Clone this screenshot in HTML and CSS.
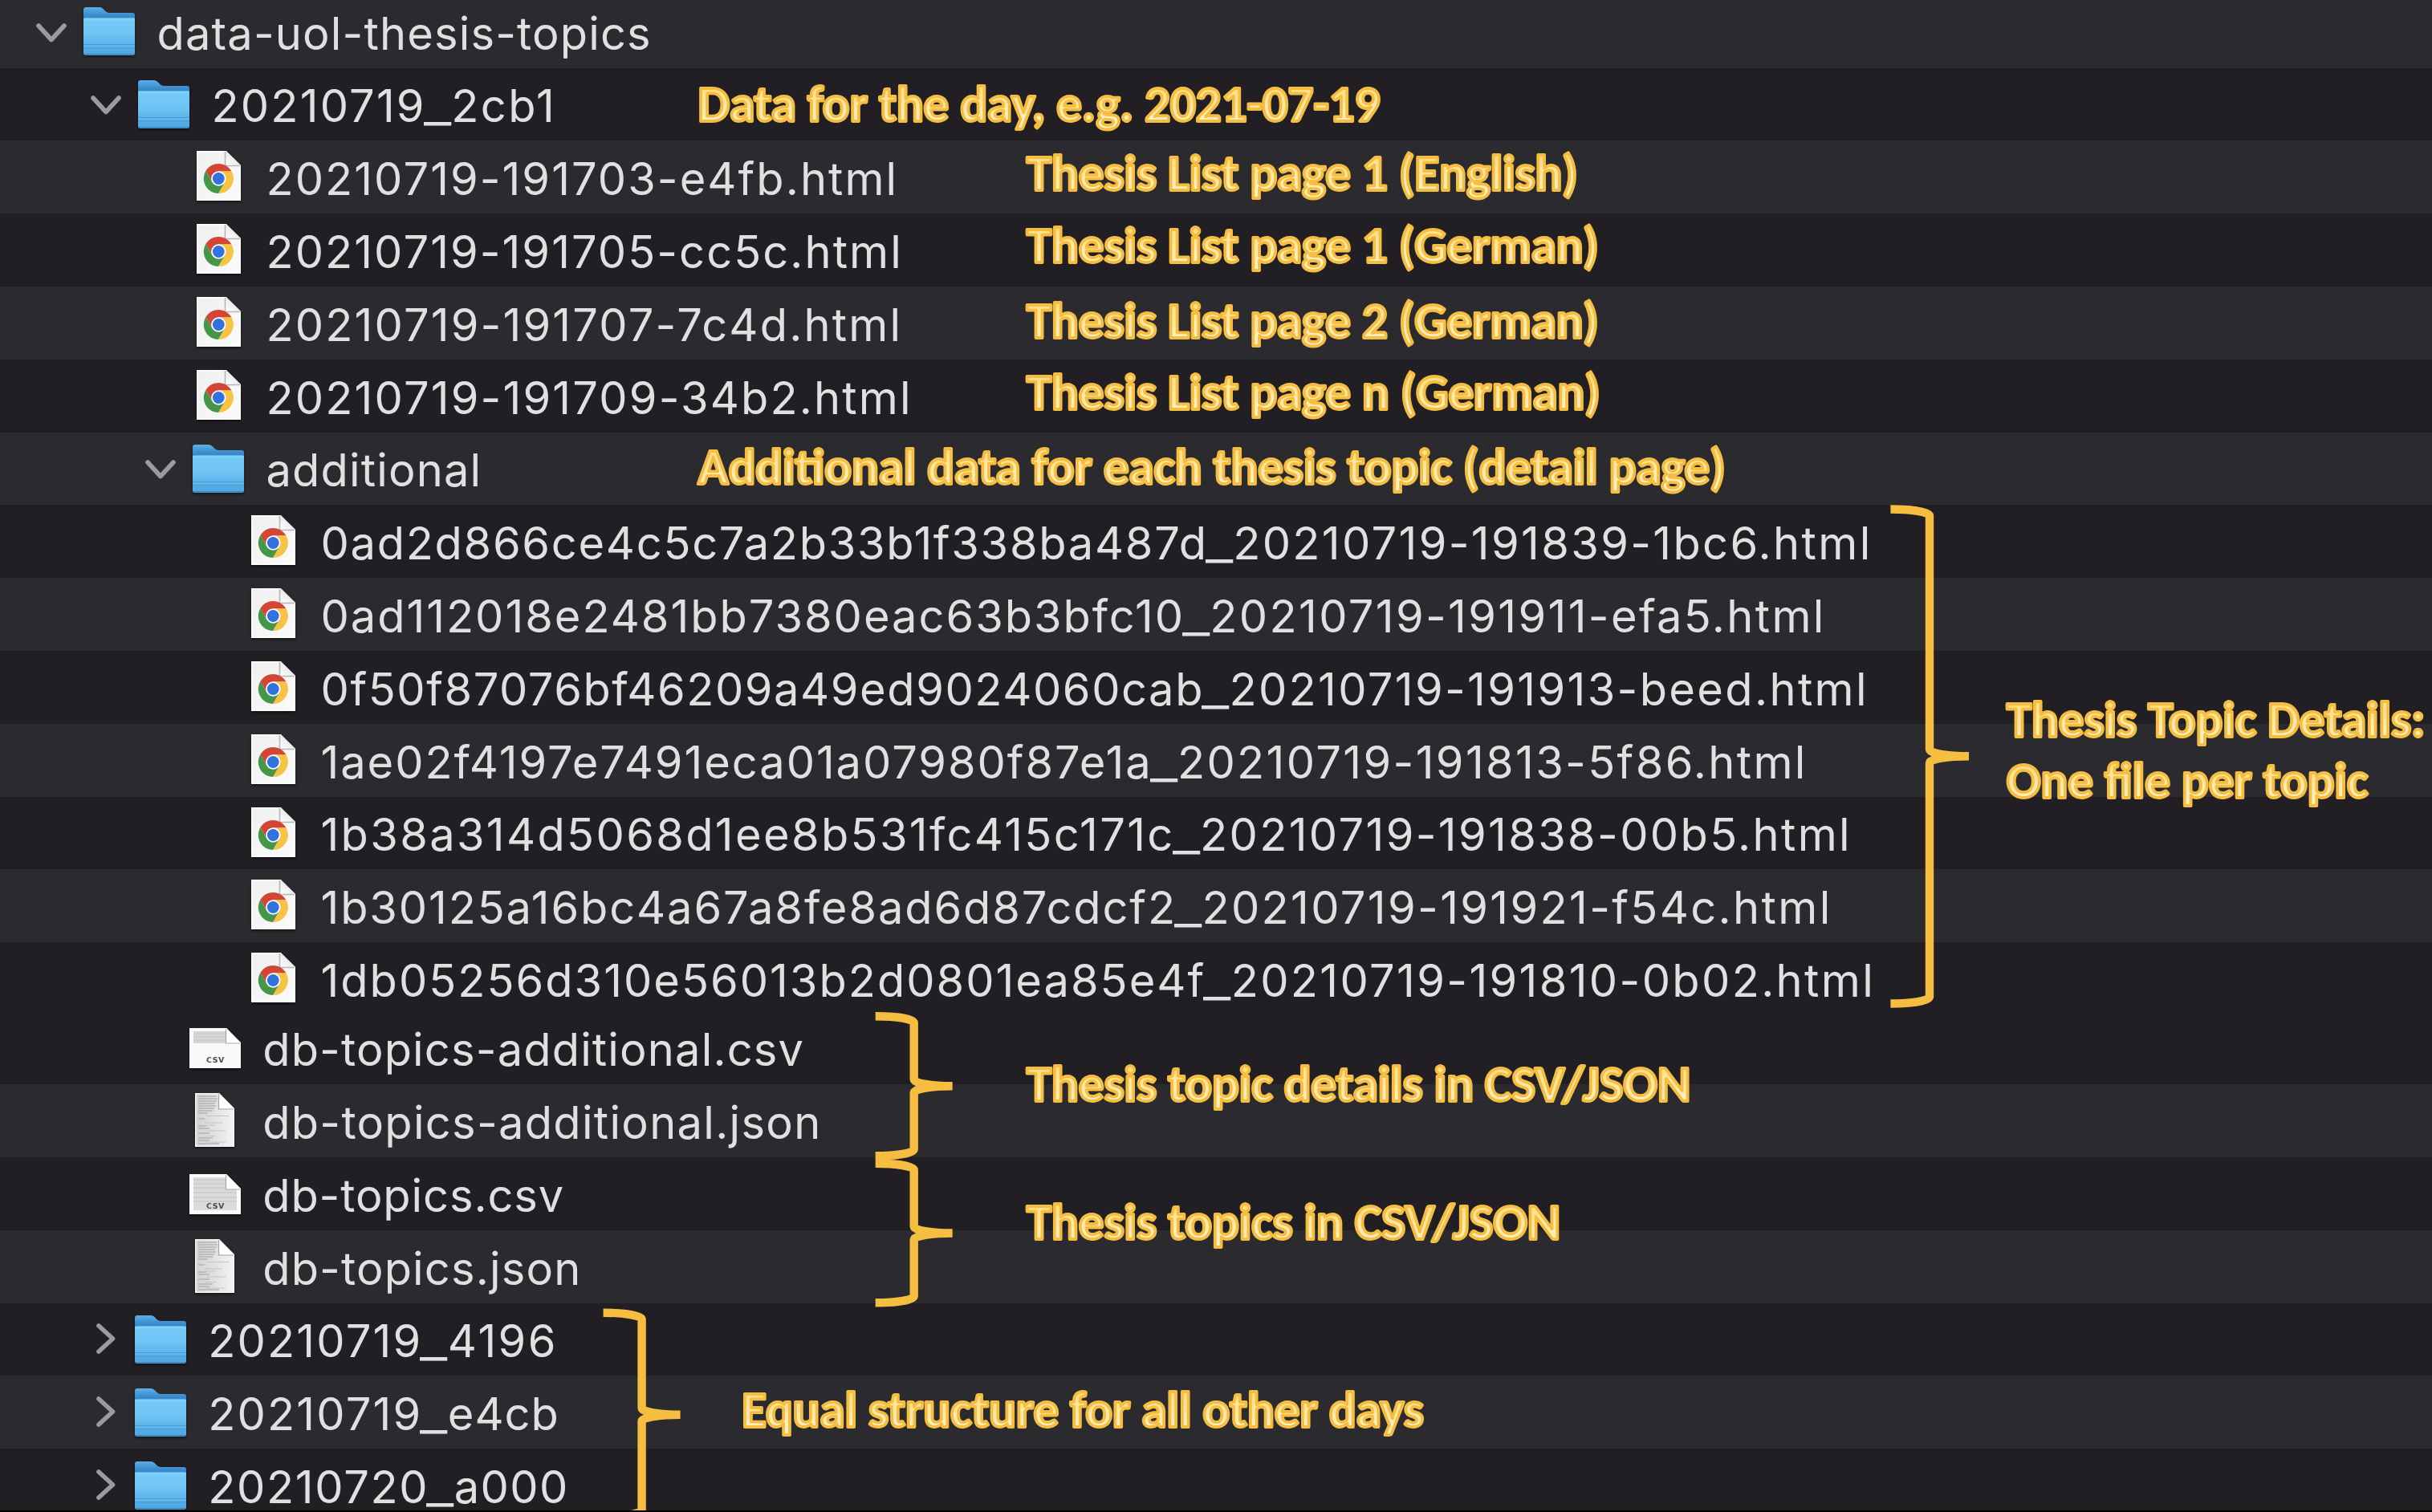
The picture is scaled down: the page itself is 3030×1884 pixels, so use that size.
FILE: index.html
```html
<!DOCTYPE html>
<html lang="en">
<head>
<meta charset="utf-8">
<title>data-uol-thesis-topics</title>
<link rel="stylesheet" href="styles.css">
</head>
<body>
<svg class="defs" aria-hidden="true">
  <defs>
    <linearGradient id="folder-back" x1="0" y1="0" x2="0" y2="1">
      <stop offset="0" stop-color="#5ab0e8"/><stop offset=".22" stop-color="#3a88cb"/><stop offset="1" stop-color="#3a88cb"/>
    </linearGradient>
    <linearGradient id="folder-front" x1="0" y1="0" x2="0" y2="1">
      <stop offset="0" stop-color="#86dafd"/><stop offset=".08" stop-color="#74c9f7"/><stop offset=".4" stop-color="#70c5f5"/><stop offset=".8" stop-color="#56afe6"/><stop offset="1" stop-color="#4ea5e0"/>
    </linearGradient>
    <linearGradient id="paper" x1="0" y1="0" x2="1" y2="1">
      <stop offset="0" stop-color="#efefef"/><stop offset="1" stop-color="#fbfbfb"/>
    </linearGradient>
    <linearGradient id="paper-grey" x1="0" y1="0" x2="1" y2="0">
      <stop offset="0" stop-color="#d2d2d2"/><stop offset=".5" stop-color="#e2e2e2"/><stop offset="1" stop-color="#f4f4f4"/>
    </linearGradient>
    <linearGradient id="fold" x1="0" y1="1" x2="1" y2="0">
      <stop offset="0" stop-color="#ffffff"/><stop offset="1" stop-color="#d8d8d8"/>
    </linearGradient>
    <linearGradient id="note-fill" x1="0" y1="0" x2="0" y2="1">
      <stop offset=".2" stop-color="#ffdc7f"/><stop offset=".8" stop-color="#fff0c6"/>
    </linearGradient>
  </defs>

  <symbol id="folder" viewBox="0 0 64 60">
    <path d="M0 3q0-3 3-3h17q2.500 0 4.500 2l3 3q2 2 5 2h28.500q3 0 3 3v40H0z" fill="url(#folder-back)"/>
    <path d="M0 15q0-1.500 1.500-1.500h61q1.500 0 1.500 1.500v42q0 3-3 3H3q-3 0-3-3z" fill="url(#folder-front)"/>
    <path d="M0 46.500h64M0 51h64" stroke="#479bd5" stroke-width="1.200"/>
    <path d="M0 48h64" stroke="#6bbdf0" stroke-width="1"/>
    <path d="M1 58.800h62" stroke="#3b86c2" stroke-width="1.600"/>
  </symbol>

  <symbol id="chrome-file" viewBox="0 0 55 62">
    <path d="M0 0h37l18 18v44H0z" fill="url(#paper)"/>
    <path d="M.75 61.250V.75H37M.75 61.250h53.500V18" fill="none" stroke="#fff" stroke-width="1.500"/>
    <path d="M36 0v18h19z" fill="url(#fold)"/>
    <path d="M35.500 1v17.500H54" fill="none" stroke="#8e8e8e" stroke-opacity=".6" stroke-width="1.600"/>
    <g transform="translate(27.300 34.500)">
      <path d="M-7.790 4.500-15.870-9.500A18.500 18.500 0 0 1 16.160-9H0z" fill="#d34534"/>
      <path d="M0-9h16.160A18.500 18.500 0 0 1-.29 18.500L7.790 4.500z" fill="#f6c344"/>
      <path d="M7.790 4.500-.29 18.500A18.500 18.500 0 0 1-15.870-9.500L-7.790 4.500z" fill="#46964a"/>
      <circle r="9.200" fill="#fff"/>
      <circle r="7.400" fill="#3172e0"/>
    </g>
  </symbol>

  <symbol id="csv-short" viewBox="0 0 64 50">
    <path d="M0 0h46l18 18v32H0z" fill="#fafafa"/>
    <path d="M5 4h41v15H5z" fill="#d6d6d6"/>
    <path d="M5 7h40M5 11h40M5 15h40" stroke="#c6c6c6" stroke-width="1.200"/>
    <path d="M46 0v18.500h18z" fill="#fff"/>
    <path d="M45.500 1v18H63" fill="none" stroke="#a9a9a9" stroke-width="1.200"/>
  </symbol>

  <symbol id="csv-full" viewBox="0 0 64 50">
    <path d="M0 0h46l18 18v32H0z" fill="#fafafa"/>
    <path d="M5 4h41v15h13v26H5z" fill="#dbdbdb"/>
    <path d="M5 7h40M5 12h40M5 17h40M5 23h54M5 29h54M5 34h54" stroke="#cccccc" stroke-width="1.400"/>
    <path d="M46 0v18.500h18z" fill="#fff"/>
    <path d="M45.500 1v18H63" fill="none" stroke="#a9a9a9" stroke-width="1.200"/>
  </symbol>

  <symbol id="text-file" viewBox="0 0 49 67">
    <path d="M0 0h30l19 19v48H0z" fill="url(#paper-grey)"/>
    <path d="M4 4h23M4 7h24M4 10h23M4 13h21M4 16h22M4 19h20M4 22h18M4 25h12M4 32h8M4 41h10M4 44h14M4 50h14M4 56h18M4 59h14M4 63h26" stroke="#b4b4b4" stroke-width="1.500"/>
    <path d="M14 28.500h28M12 37h22M14 40h12M14 47h24M12 53.500h14M12 61h26" stroke="#c4c4c4" stroke-width="1.200"/>
    <path d="M.75 66.250V.75H30M.75 66.250h47.500V19" fill="none" stroke="#f6f6f6" stroke-width="1.500"/>
    <path d="M30 0v19.500h19z" fill="#fdfdfd"/>
    <path d="M29.500 1v19H48" fill="none" stroke="#a6a6a6" stroke-width="1.200"/>
  </symbol>

  <symbol id="open" viewBox="0 0 38 24">
    <path d="M3 3 19 20.500 35 3"/>
  </symbol>
  <symbol id="closed" viewBox="0 0 24 38">
    <path d="M3 3 20.500 19 3 35"/>
  </symbol>
</svg>

<main class="finder">
  <ul class="listing">
    <li class="row root"><svg class="twisty open"><use href="#open"/></svg><span class="icon"><svg class="folder"><use href="#folder"/></svg></span><span class="name word">data-uol-thesis-topics</span></li>
    <li class="row l1"><svg class="twisty open"><use href="#open"/></svg><span class="icon"><svg class="folder"><use href="#folder"/></svg></span><span class="name"><span class="day">20210719</span><span class="bar">_</span><span class="run-a">2cb1</span></span></li>
    <li class="row l2"><span class="icon"><svg class="chrome"><use href="#chrome-file"/></svg></span><span class="name page-a">20210719-191703-e4fb.html</span></li>
    <li class="row l2"><span class="icon"><svg class="chrome"><use href="#chrome-file"/></svg></span><span class="name page-a">20210719-191705-cc5c.html</span></li>
    <li class="row l2"><span class="icon"><svg class="chrome"><use href="#chrome-file"/></svg></span><span class="name page-b">20210719-191707-7c4d.html</span></li>
    <li class="row l2"><span class="icon"><svg class="chrome"><use href="#chrome-file"/></svg></span><span class="name page-b">20210719-191709-34b2.html</span></li>
    <li class="row l2"><svg class="twisty open"><use href="#open"/></svg><span class="icon"><svg class="folder"><use href="#folder"/></svg></span><span class="name word">additional</span></li>
    <li class="row l3"><span class="icon"><svg class="chrome"><use href="#chrome-file"/></svg></span><span class="name"><span class="hash hash-a">0ad2d866ce4c5c7a2b33b1f338ba487d</span><span class="bar">_</span><span class="stamp">20210719-191839-1bc6.html</span></span></li>
    <li class="row l3"><span class="icon"><svg class="chrome"><use href="#chrome-file"/></svg></span><span class="name"><span class="hash hash-b">0ad112018e2481bb7380eac63b3bfc10</span><span class="bar">_</span><span class="stamp">20210719-191911-efa5.html</span></span></li>
    <li class="row l3"><span class="icon"><svg class="chrome"><use href="#chrome-file"/></svg></span><span class="name"><span class="hash hash-c">0f50f87076bf46209a49ed9024060cab</span><span class="bar">_</span><span class="stamp">20210719-191913-beed.html</span></span></li>
    <li class="row l3"><span class="icon"><svg class="chrome"><use href="#chrome-file"/></svg></span><span class="name"><span class="hash hash-d">1ae02f4197e7491eca01a07980f87e1a</span><span class="bar">_</span><span class="stamp">20210719-191813-5f86.html</span></span></li>
    <li class="row l3"><span class="icon"><svg class="chrome"><use href="#chrome-file"/></svg></span><span class="name"><span class="hash hash-e">1b38a314d5068d1ee8b531fc415c171c</span><span class="bar">_</span><span class="stamp">20210719-191838-00b5.html</span></span></li>
    <li class="row l3"><span class="icon"><svg class="chrome"><use href="#chrome-file"/></svg></span><span class="name"><span class="hash hash-f">1b30125a16bc4a67a8fe8ad6d87cdcf2</span><span class="bar">_</span><span class="stamp">20210719-191921-f54c.html</span></span></li>
    <li class="row l3"><span class="icon"><svg class="chrome"><use href="#chrome-file"/></svg></span><span class="name"><span class="hash hash-g">1db05256d310e56013b2d0801ea85e4f</span><span class="bar">_</span><span class="stamp">20210719-191810-0b02.html</span></span></li>
  </ul>
  <ul class="listing lower">
    <li class="row l2"><span class="icon"><svg class="csv"><use href="#csv-short"/><text class="badge" x="32.500" y="43">CSV</text></svg></span><span class="name word">db-topics-additional.csv</span></li>
    <li class="row l2"><span class="icon"><svg class="text"><use href="#text-file"/></svg></span><span class="name word json">db-topics-additional.json</span></li>
    <li class="row l2"><span class="icon"><svg class="csv"><use href="#csv-full"/><text class="badge" x="32.500" y="43">CSV</text></svg></span><span class="name word short">db-topics.csv</span></li>
    <li class="row l2"><span class="icon"><svg class="text"><use href="#text-file"/></svg></span><span class="name word">db-topics.json</span></li>
    <li class="row l1"><svg class="twisty closed"><use href="#closed"/></svg><span class="icon"><svg class="folder"><use href="#folder"/></svg></span><span class="name"><span class="day">20210719</span><span class="bar">_</span><span class="run-a">4196</span></span></li>
    <li class="row l1"><svg class="twisty closed"><use href="#closed"/></svg><span class="icon"><svg class="folder"><use href="#folder"/></svg></span><span class="name"><span class="day">20210719</span><span class="bar">_</span><span class="run-b">e4cb</span></span></li>
    <li class="row l1"><svg class="twisty closed"><use href="#closed"/></svg><span class="icon"><svg class="folder"><use href="#folder"/></svg></span><span class="name"><span class="day next">20210720</span><span class="bar">_</span><span class="run-c">a000</span></span></li>
  </ul>

  <svg class="notes" viewBox="0 0 3030 1882">
    <g class="braces">
      <path d="M2355.400 634.500A49 8.200 0 0 1 2404 642.700V934a49 8.200 0 0 0 49 8.200M2453 942.200a49 8.200 0 0 0-49 8.200V1242.300A49 8.200 0 0 1 2355.400 1250.500"/>
      <path d="M1090.700 1266.300A48 8 0 0 1 1138.700 1274.300V1345.300a48 8 0 0 0 48 8M1186.700 1353.300a48 8 0 0 0-48 8V1432.300A48 8 0 0 1 1090.700 1440.300"/>
      <path d="M1090.700 1449.700A48 8 0 0 1 1138.700 1457.700V1528.500a48 8 0 0 0 48 8M1186.700 1536.500a48 8 0 0 0-48 8V1615.300A48 8 0 0 1 1090.700 1623.300"/>
      <path d="M751.600 1635.700A48 8 0 0 1 799.600 1643.700V1754.700a48 8 0 0 0 48 8M847.600 1762.700a48 8 0 0 0-48 8V1881.700A48 8 0 0 1 751.600 1889.700"/>
    </g>
    <g class="captions">
      <text x="869.600" y="150.700">Data for the day, e.g. 2021-07-19</text>
      <text x="1279" y="237">Thesis List page 1 (English)</text>
      <text x="1279" y="326.500">Thesis List page 1 (German)</text>
      <text x="1279" y="420.500">Thesis List page 2 (German)</text>
      <text x="1279" y="509.500">Thesis List page n (German)</text>
      <text x="869.600" y="602.500">Additional data for each thesis topic (detail page)</text>
      <text x="2500" y="918.400">Thesis Topic Details:</text>
      <text x="2500" y="994.400">One file per topic</text>
      <text x="1279" y="1372">Thesis topic details in CSV/JSON</text>
      <text x="1279" y="1543.500">Thesis topics in CSV/JSON</text>
      <text x="924.300" y="1778">Equal structure for all other days</text>
    </g>
  </svg>
</main>
</body>
</html>
```
FILE: styles.css
```css
body {
  margin: 0;
  background: #000;
  font-family: Inter, "Liberation Sans", sans-serif;
}

.defs {
  position: absolute;
  width: 0;
  height: 0;
}

.finder {
  position: relative;
  width: 3030px;
  height: 1882px;
  overflow: hidden;
  background: #211f24;
}

.listing {
  margin: 0;
  padding: 0;
  list-style: none;
  --name-line: 86px;
  --icon-start: 96px;
}

.listing.lower {
  margin-top: -4.600px;
  --name-line: 85px;
  --icon-start: 91.700px;
}

.row {
  --indent: 0px;
  position: relative;
  display: flex;
  align-items: flex-end;
  box-sizing: border-box;
  height: 90.800px;
  padding-left: calc(var(--indent) + var(--icon-start));
}

.row.root { height: 84.700px; }
.listing .row:nth-child(odd) { background: #2b2a2f; }
.listing .row:nth-child(even) { background: #211f24; }
.listing.lower .row:nth-child(odd) { background: #211f24; }
.listing.lower .row:nth-child(even) { background: #2b2a2f; }

.row.l1 { --indent: 68px; }
.row.l2 { --indent: 136px; }
.row.l3 { --indent: 204px; }

.twisty {
  position: absolute;
  fill: none;
  stroke: #9b9b9d;
  stroke-width: 5.600px;
  stroke-linecap: round;
  stroke-linejoin: round;
}

.twisty.open {
  left: calc(var(--indent) + 44.500px);
  bottom: 32px;
  width: 38px;
  height: 24px;
}

.twisty.closed {
  left: calc(var(--indent) + 51.500px);
  bottom: 27.500px;
  width: 24px;
  height: 38px;
}

.icon {
  display: flex;
  justify-content: center;
  width: 80px;
  margin-right: 19.500px;
  filter: drop-shadow(0 2px 1.500px rgba(0, 0, 0, .5));
}

.folder { width: 64px; height: 60px; margin-bottom: 15.500px; }
.chrome { width: 55px; height: 62px; margin-bottom: 15.800px; }
.csv { width: 64px; height: 50px; margin-bottom: 20.200px; }
.text { width: 49px; height: 67px; margin-bottom: 12.700px; }

.badge {
  font: 700 9.500px "DejaVu Sans", sans-serif;
  letter-spacing: .6px;
  text-anchor: middle;
  fill: #4c4c4c;
}

.name {
  font-size: 56px;
  line-height: var(--name-line);
  white-space: nowrap;
  color: #e1e0e1;
}

.word { letter-spacing: 1.160px; }
.word.json { letter-spacing: 1.300px; }
.word.short { letter-spacing: .9px; }
.page-a { letter-spacing: 2.050px; }
.page-b { letter-spacing: 2.160px; }

/* Wide underscore between the two halves of a name */
.bar {
  display: inline-block;
  width: 34.400px;
  height: 1em;
  line-height: 1;
  transform: scaleX(1.340);
  transform-origin: left;
}

.day { margin-right: -3px; letter-spacing: 2.180px; }
.day.next { letter-spacing: 1.660px; }
.run-a { letter-spacing: 2.450px; }
.run-b { letter-spacing: .930px; }
.run-c { letter-spacing: 1.400px; }

.hash { margin-right: -3px; }
.hash-a { letter-spacing: 1.706px; }
.hash-b { letter-spacing: 1.972px; }
.hash-c { letter-spacing: 1.563px; }
.hash-d { letter-spacing: 1.934px; }
.hash-e { letter-spacing: 2.338px; }
.hash-f { letter-spacing: 1.880px; }
.hash-g { letter-spacing: 2.010px; }
.stamp { letter-spacing: 2.350px; }

.notes {
  position: absolute;
  inset: 0;
  width: 3030px;
  height: 1882px;
}

.braces {
  fill: none;
  stroke: #f6be40;
  stroke-width: 10.400px;
}

.captions {
  font: 700 62.800px Carlito, Lato, sans-serif;
  fill: url(#note-fill);
  stroke: #f6be40;
  stroke-width: 3.800px;
  stroke-linejoin: round;
}
```
